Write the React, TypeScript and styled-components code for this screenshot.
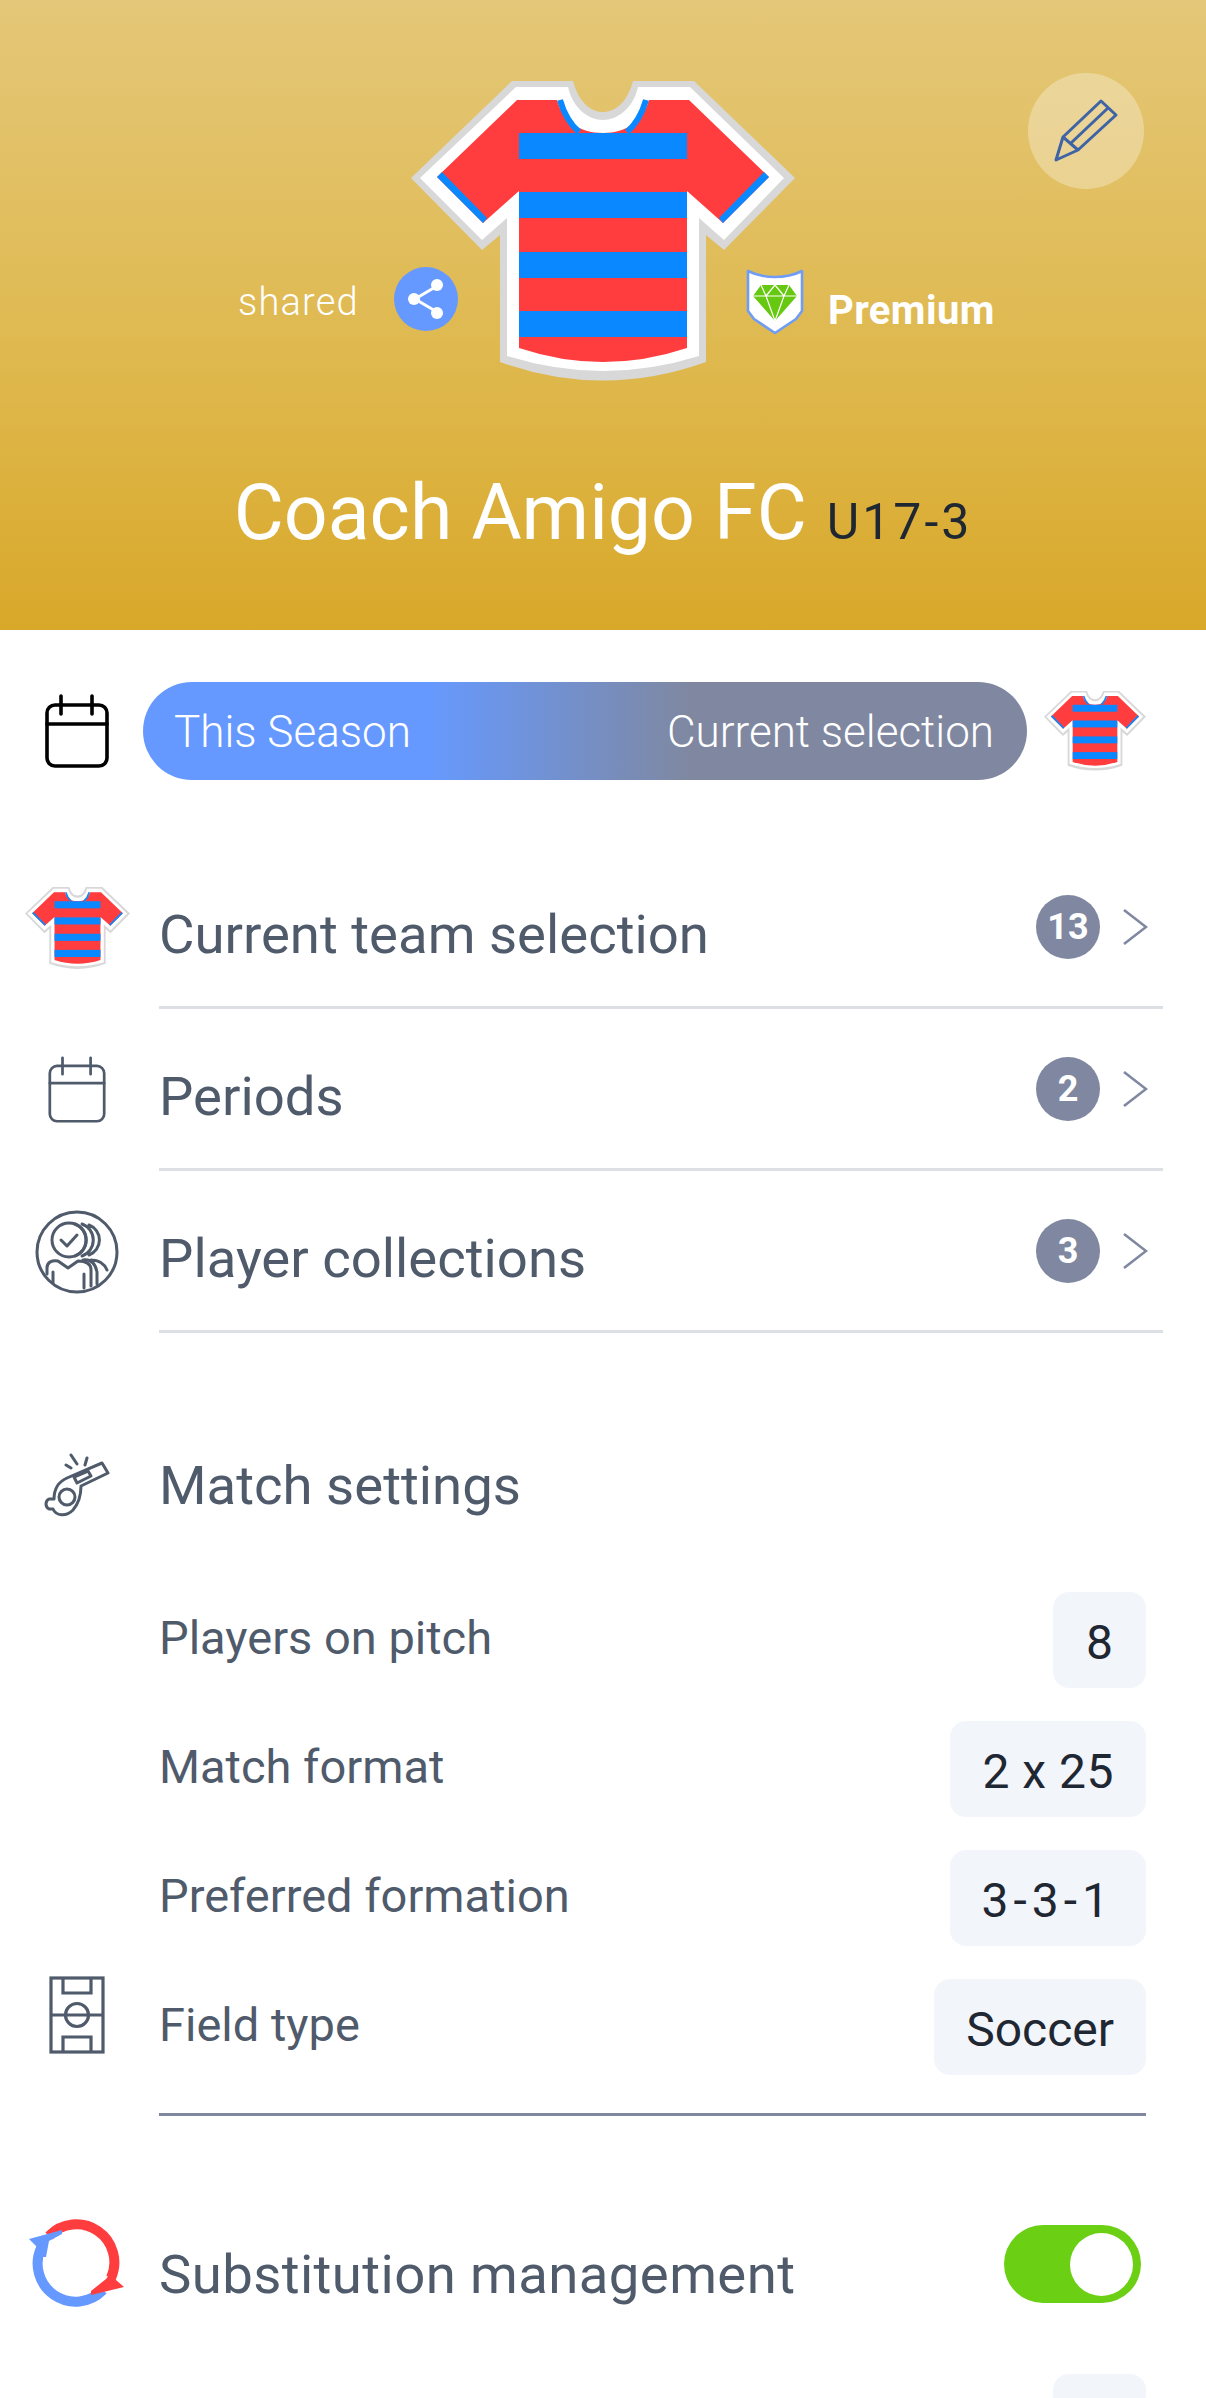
import React from "react";
import styled, { createGlobalStyle } from "styled-components";

const GlobalStyle = createGlobalStyle`
  html, body { margin: 0; padding: 0; background: #fff; }
  body { font-family: "Roboto", "Noto Sans", sans-serif; }
  * { box-sizing: border-box; }
`;

const Page = styled.div`
  width: 1206px;
  height: 2398px;
  overflow: hidden;
  background: #fff;
`;

const Header = styled.header`
  position: relative;
  height: 630px;
  padding-top: 81px;
  background: linear-gradient(180deg, #e4c778 0%, #dfb950 55%, #d8a829 100%);
`;

const EditButton = styled.button`
  position: absolute;
  top: 73px;
  right: 62px;
  width: 116px;
  height: 116px;
  padding: 0;
  border: 0;
  border-radius: 50%;
  background: rgba(255, 255, 255, 0.3);
  display: flex;
  align-items: center;
  justify-content: center;
`;

const Hero = styled.div`
  display: flex;
  height: 300px;
`;

const SharedBox = styled.div`
  width: 458px;
  margin-right: -47px;
  padding: 186px 0 0 238px;
  display: flex;
  align-items: flex-start;
  justify-content: space-between;
  position: relative;
  z-index: 1;
`;

const SharedLabel = styled.span`
  margin-top: 12px;
  color: #fff;
  font-size: 38px;
  font-weight: 300;
  letter-spacing: 1.2px;
  line-height: 46px;
`;

const ShareDot = styled.span`
  width: 64px;
  height: 64px;
  border-radius: 50%;
  background: #6699ff;
  display: flex;
  align-items: center;
  justify-content: center;
`;

const PremiumBox = styled.div`
  margin-left: -49px;
  padding-top: 188px;
  display: flex;
  align-items: flex-start;
  gap: 24px;
`;

const PremiumLabel = styled.span`
  margin-top: 19px;
  color: #fff;
  font-size: 40px;
  font-weight: 700;
  letter-spacing: 0.4px;
  line-height: 46px;
`;

const TitleRow = styled.div`
  margin-top: 84px;
  display: flex;
  align-items: baseline;
  justify-content: center;
  gap: 20px;
`;

const Title = styled.h1`
  margin: 0;
  color: #fff;
  font-size: 77px;
  font-weight: 400;
  line-height: 96px;
`;

const SubTitle = styled.span`
  color: #1f2733;
  font-size: 50px;
  font-weight: 400;
  letter-spacing: 3px;
`;

const SeasonRow = styled.div`
  margin-top: 52px;
  padding: 0 60px 0 45px;
  display: flex;
  align-items: center;
  height: 98px;
`;

const SeasonIcon = styled.span`
  width: 98px;
  display: flex;
`;

const SeasonPill = styled.div`
  width: 884px;
  height: 98px;
  padding: 2px 33px 0 31px;
  border-radius: 49px;
  background: linear-gradient(90deg, #6699ff 0%, #6699ff 32%, #7f88a0 62%, #7f88a0 100%);
  color: #fff;
  display: flex;
  align-items: center;
  justify-content: space-between;
  font-size: 44px;
  font-weight: 300;
`;

const SeasonJersey = styled.span`
  margin-left: 17px;
  display: flex;
`;

const MenuList = styled.ul`
  list-style: none;
  margin: 67px 0 0;
  padding: 0;
`;

const MenuRow = styled.li`
  display: flex;
  height: 162px;
`;

const RowIcon = styled.span`
  width: 159px;
  flex: none;
  display: flex;
  align-items: center;
  justify-content: center;
  padding-right: 5px;
`;

const MenuBody = styled.div`
  width: 1004px;
  padding-top: 14px;
  border-bottom: 3px solid #dcdfe4;
  display: flex;
  align-items: center;
`;

const MenuText = styled.span`
  flex: 1;
  color: #4f5a6b;
  font-size: 54.5px;
  font-weight: 400;
  line-height: 64px;
`;

const CountBadge = styled.span`
  width: 64px;
  height: 64px;
  margin: -13px 22px 0 0;
  border-radius: 50%;
  background: #7f88a0;
  color: #fff;
  font-size: 36px;
  font-weight: 700;
  display: flex;
  align-items: center;
  justify-content: center;
`;

const Chevron = styled.span`
  width: 41px;
  margin-top: -13px;
  display: flex;
`;

const HeadingRow = styled.div`
  margin-top: 110px;
  height: 84px;
  display: flex;
  align-items: center;
`;

const SettingsList = styled.div`
  margin-top: 65px;
  padding-right: 60px;
  display: flex;
  flex-direction: column;
  gap: 33px;
`;

const SettingRow = styled.div`
  display: flex;
  align-items: center;
  height: 96px;
`;

const SettingIcon = styled.span`
  width: 159px;
  height: 96px;
  flex: none;
  display: flex;
  align-items: flex-start;
  justify-content: center;
  padding-right: 5px;
  margin-top: -6px;
`;

const SettingLabel = styled.span`
  flex: 1;
  margin-top: -6px;
  color: #4f5a6b;
  font-size: 47px;
  font-weight: 400;
`;

const ValuePill = styled.span<{ $tracking?: number }>`
  height: 96px;
  min-width: 93px;
  padding: 4px 32px 0;
  border-radius: 16px;
  background: #f2f5fa;
  color: #1f2733;
  font-size: 48px;
  font-weight: 400;
  letter-spacing: ${(p) => p.$tracking ?? 0}px;
  display: flex;
  align-items: center;
  justify-content: center;
`;

const Divider = styled.hr`
  margin: 38px 60px 0 159px;
  border: 0;
  height: 3px;
  background: #7f88a0;
`;

const SubRow = styled.div`
  margin-top: 109px;
  height: 78px;
  padding-right: 65px;
  display: flex;
  align-items: center;
`;

const SubText = styled(MenuText)`
  margin-top: 20px;
  letter-spacing: 0.4px;
`;

const Toggle = styled.span`
  width: 137px;
  height: 78px;
  padding: 8px 8px 8px 66px;
  border-radius: 39px;
  background: #6bcf14;
  display: flex;
`;

const ToggleKnob = styled.span`
  width: 63px;
  height: 63px;
  border-radius: 50%;
  background: #fff;
`;

const TrailingPill = styled.div`
  margin: 71px 60px 0 auto;
  width: 93px;
  height: 96px;
  border-radius: 16px;
  background: #f2f5fa;
`;

const Jersey = ({ width }: { width: number }) => (
  <svg width={width} height={(width * 300) / 384} viewBox="0 0 384 300">
    <path
      d="M101 0H162C168 22 180 31 192 31C204 31 216 22 222 0H283L384 97L313 169L295 154V281Q192 318 89 281V154L71 169L0 97Z"
      fill="#d8d8d8"
    />
    <path
      d="M105 6H157C162 28 178 39 192 39C206 39 222 28 227 6H279L373 97L313 159L288 137V275Q192 305 96 275V137L71 159L9 97Z"
      fill="#fff"
    />
    <path
      d="M106 19H146C152 40 168 52 192 52C216 52 232 40 238 19H278L358 96L312 142L276 110V267Q192 295 108 267V110L72 142L26 96Z"
      fill="#ff3d3f"
    />
    <path d="M26 96L31 91L76 137L72 142Z M358 96L353 91L308 137L312 142Z" fill="#0a88ff" />
    <path d="M149 19C153 33 160 44 168 51M235 19C231 33 224 44 216 51" fill="none" stroke="#0a88ff" strokeWidth="6" />
    <rect x="108" y="52" width="168" height="26" fill="#0a88ff" />
    <rect x="108" y="111" width="168" height="26" fill="#0a88ff" />
    <rect x="108" y="171" width="168" height="26" fill="#0a88ff" />
    <rect x="108" y="230" width="168" height="26" fill="#0a88ff" />
  </svg>
);

const CalendarIcon = ({ color, stroke, width }: { color: string; stroke: number; width: number }) => (
  <svg width={width} height={(width * 74) / 64} viewBox="0 0 64 74" fill="none" stroke={color} strokeWidth={stroke} strokeLinecap="round">
    <rect x="2" y="11" width="60" height="61" rx="8" />
    <path d="M2 30H62M16 2V20M47 2V20" />
  </svg>
);

const PlayersIcon = () => (
  <svg width="84" height="84" viewBox="0 0 84 84" fill="none" stroke="#4f5a6b" strokeWidth="3" strokeLinecap="round" strokeLinejoin="round">
    <circle cx="42" cy="42" r="40" />
    <circle cx="34" cy="30" r="17" />
    <path d="M40 14A17 17 0 0 1 40 46M47 14A17 17 0 0 1 47 46M54 15A16 16 0 0 1 54 45" />
    <path d="M26 30L32 36L42 25" />
    <path d="M12 64V58C12 52 17 50 23 51L33 58L43 51C50 51 56 53 56 60V76" />
    <path d="M18 62V73M49 64V78M48 50C55 49 60 52 62 62V74M56 50C63 50 69 53 72 60" />
  </svg>
);

const WhistleIcon = () => (
  <svg width="66" height="64" viewBox="0 0 66 64" fill="none" stroke="#4f5a6b" strokeWidth="3" strokeLinecap="round" strokeLinejoin="round">
    <path d="M58 10L64 20L37 33C37 41 35 50 29 57C22 64 12 63 9 56H5C1 54 1 48 5 46H10C10 36 14 29 23 25Z" />
    <circle cx="23" cy="44" r="8" />
    <path d="M30 24L44 18L47 23L33 30Z" />
    <path d="M27 2L33 11M43 5L41 12M22 12L27 15" />
  </svg>
);

const FieldIcon = () => (
  <svg width="56" height="78" viewBox="0 0 56 78" fill="none" stroke="#4f5a6b" strokeWidth="3.2">
    <rect x="2" y="2" width="52" height="74" />
    <path d="M2 39H54M14 2V17H42V2M14 76V61H42V76" />
    <circle cx="28" cy="39" r="11.5" />
  </svg>
);

const SubstitutionIcon = () => (
  <svg width="96" height="90" viewBox="0 0 96 90" fill="none">
    <path d="M20 17A38 38 0 0 1 82 59" stroke="#ff3d3f" strokeWidth="10" />
    <path d="M74 71A38 38 0 0 1 12 29" stroke="#6699ff" strokeWidth="10" />
    <path d="M33 11L0 20L8 28L7 38L17 38L20 22L33 15Z" fill="#6699ff" />
    <path d="M85 50L87 61L95 68L62 76L62 72L77 60Z" fill="#ff3d3f" />
  </svg>
);

const PencilIcon = () => (
  <svg width="66" height="66" viewBox="0 0 66 66" fill="none" stroke="#3e64a6" strokeWidth="3" strokeLinejoin="round">
    <path d="M48 3L63 17L25 52L3 62L10 39Z" />
    <path d="M10 39L25 52M18 45L55 10" />
  </svg>
);

const ShareIcon = () => (
  <svg width="38" height="42" viewBox="0 0 38 42" fill="none">
    <path d="M8 21L30 8M8 21L30 34" stroke="#fff" strokeWidth="3" />
    <circle cx="7" cy="21" r="6" fill="#fff" />
    <circle cx="30" cy="7" r="6" fill="#fff" />
    <circle cx="30" cy="35" r="6" fill="#fff" />
  </svg>
);

const ShieldIcon = () => (
  <svg width="58" height="66" viewBox="0 0 58 66">
    <path d="M2 2C12 7 20 8 29 8C38 8 46 7 56 2V42L50 50L29 64L8 50L2 42Z" fill="#fff" stroke="#6f9df5" strokeWidth="2.6" strokeLinejoin="round" />
    <path d="M15 16H43L51 27L29 52L7 27Z" fill="#66c811" />
    <path d="M7 27H51M15 16L20 27L29 52L38 27L43 16M20 27L29 16L38 27" fill="none" stroke="#fff" strokeWidth="1.2" />
  </svg>
);

const ChevronIcon = () => (
  <svg width="26" height="38" viewBox="0 0 26 38" fill="none" stroke="#7f88a0" strokeWidth="2.6">
    <path d="M2 2L24 19L2 36" />
  </svg>
);

const menuItems = [
  { label: "Current team selection", count: 13, icon: <Jersey width={105} /> },
  { label: "Periods", count: 2, icon: <CalendarIcon color="#4f5a6b" stroke={3} width={58} /> },
  { label: "Player collections", count: 3, icon: <PlayersIcon /> },
];

const settings = [
  { label: "Players on pitch", value: "8" },
  { label: "Match format", value: "2 x 25", tracking: 0.5 },
  { label: "Preferred formation", value: "3-3-1", tracking: 5 },
  { label: "Field type", value: "Soccer", icon: <FieldIcon /> },
];

export default function App() {
  return (
    <Page>
      <GlobalStyle />
      <Header>
        <EditButton>
          <PencilIcon />
        </EditButton>
        <Hero>
          <SharedBox>
            <SharedLabel>shared</SharedLabel>
            <ShareDot>
              <ShareIcon />
            </ShareDot>
          </SharedBox>
          <Jersey width={384} />
          <PremiumBox>
            <ShieldIcon />
            <PremiumLabel>Premium</PremiumLabel>
          </PremiumBox>
        </Hero>
        <TitleRow>
          <Title>Coach Amigo FC</Title>
          <SubTitle>U17-3</SubTitle>
        </TitleRow>
      </Header>
      <SeasonRow>
        <SeasonIcon>
          <CalendarIcon color="#000" stroke={3.6} width={64} />
        </SeasonIcon>
        <SeasonPill>
          <span>This Season</span>
          <span>Current selection</span>
        </SeasonPill>
        <SeasonJersey>
          <Jersey width={102} />
        </SeasonJersey>
      </SeasonRow>
      <MenuList>
        {menuItems.map((item) => (
          <MenuRow key={item.label}>
            <RowIcon>{item.icon}</RowIcon>
            <MenuBody>
              <MenuText>{item.label}</MenuText>
              <CountBadge>{item.count}</CountBadge>
              <Chevron>
                <ChevronIcon />
              </Chevron>
            </MenuBody>
          </MenuRow>
        ))}
      </MenuList>
      <HeadingRow>
        <RowIcon>
          <WhistleIcon />
        </RowIcon>
        <MenuText>Match settings</MenuText>
      </HeadingRow>
      <SettingsList>
        {settings.map((row) => (
          <SettingRow key={row.label}>
            <SettingIcon>{row.icon}</SettingIcon>
            <SettingLabel>{row.label}</SettingLabel>
            <ValuePill $tracking={row.tracking}>{row.value}</ValuePill>
          </SettingRow>
        ))}
      </SettingsList>
      <Divider />
      <SubRow>
        <RowIcon>
          <SubstitutionIcon />
        </RowIcon>
        <SubText>Substitution management</SubText>
        <Toggle>
          <ToggleKnob />
        </Toggle>
      </SubRow>
      <TrailingPill />
    </Page>
  );
}
